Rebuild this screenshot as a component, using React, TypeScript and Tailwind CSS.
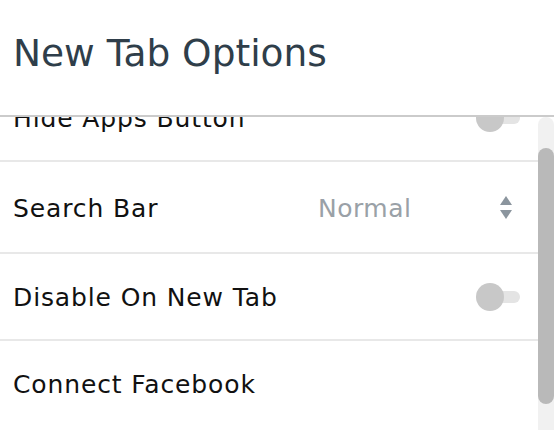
import { useEffect, useRef } from "react";

type Row =
  | { kind: "toggle"; label: string; on: boolean }
  | { kind: "select"; label: string; value: string }
  | { kind: "link"; label: string };

const rows: Row[] = [
  { kind: "toggle", label: "Hide Apps Button", on: false },
  { kind: "select", label: "Search Bar", value: "Normal" },
  { kind: "toggle", label: "Disable On New Tab", on: false },
  { kind: "link", label: "Connect Facebook" },
];

function Toggle({ on }: { on: boolean }) {
  return (
    <div className="relative w-[44px] h-[28px] shrink-0">
      <div className="absolute right-0 top-[8px] w-[38px] h-[12px] rounded-full bg-[#e4e4e4]" />
      <div
        className={`absolute top-0 w-[28px] h-[28px] rounded-full ${
          on ? "right-0 bg-[#4a90e2]" : "left-0 bg-[#c8c8c8]"
        }`}
      />
    </div>
  );
}

function SelectArrows() {
  return (
    <svg width="12" height="23" viewBox="0 0 12 23" className="shrink-0">
      <path d="M6 0 L12 9 L0 9 Z" fill="#8b959e" />
      <path d="M0 14 L12 14 L6 23 Z" fill="#8b959e" />
    </svg>
  );
}

export default function App() {
  const listRef = useRef<HTMLDivElement>(null);

  useEffect(() => {
    // panel is shown scrolled a little, first row half under the header
    if (listRef.current) listRef.current.scrollTop = 42;
  }, []);

  return (
    <div
      className="w-[554px] h-[430px] bg-white flex flex-col overflow-hidden"
      style={{ fontFamily: '"DejaVu Sans", sans-serif' }}
    >
      <div className="h-[117px] shrink-0 flex items-center pl-[13px] pb-2 border-b-2 border-[#cbcbcb]">
        <h1 className="text-[37.5px] leading-none text-[#2f3e4a]">New Tab Options</h1>
      </div>

      <div className="flex-1 flex min-h-0">
        <div ref={listRef} className="flex-1 overflow-hidden">
          <div className="flex flex-col pb-[38px]">
            {rows.map((row, i) => (
              <div
                key={row.label}
                className={`flex items-center justify-between pl-[13px] pr-[18px] ${
                  i < rows.length - 1 ? "border-b-2 border-[#e8e8e8]" : ""
                } ${row.kind === "select" ? "h-[92px]" : row.kind === "link" ? "h-[85px]" : "h-[87px]"}`}
              >
                <span className="text-[25px] leading-none tracking-[0.035em] text-[#111] pt-[2px]">
                  {row.label}
                </span>
                {row.kind === "toggle" && <Toggle on={row.on} />}
                {row.kind === "select" && (
                  <div className="flex items-center w-[202px] justify-between pr-[8px]">
                    <span className="text-[25px] leading-none tracking-[0.02em] text-[#9aa1a7] pt-[2px]">
                      {row.value}
                    </span>
                    <SelectArrows />
                  </div>
                )}
              </div>
            ))}
          </div>
        </div>

        {/* scrollbar */}
        <div className="w-[16px] shrink-0 bg-[#f1f1f1] rounded-t-[8px] pt-[31px]">
          <div className="h-[256px] rounded-[8px] bg-[#b9b9b9]" />
        </div>
      </div>
    </div>
  );
}
